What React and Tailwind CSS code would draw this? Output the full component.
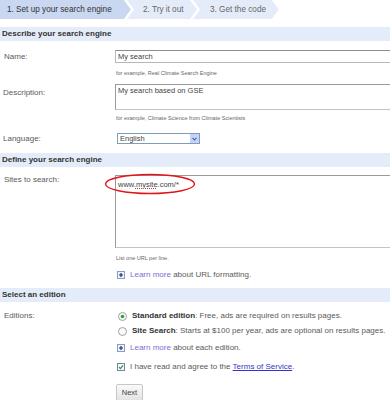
import React from 'react';

const font = { fontFamily: '"Liberation Sans", Arial, sans-serif' };

// chevron between two tabs
function Sep({ left, right }) {
    return (
        <svg width="16" height="19" viewBox="0 0 16 19" className="shrink-0 block">
            <rect x="0" y="0" width="16" height="19" fill={right} />
            <polygon points="0,0 6,0 13,9.5 6,19 0,19" fill={left} />
            <polygon points="6,0 9,0 16,9.5 9,19 6,19 13,9.5" fill="#ffffff" />
        </svg>
    );
}

function Header({ children, className = '' }) {
    return (
        <div className={`h-[14px] bg-[#e5ecf9] pl-[2px] text-[8px] leading-[14px] font-bold text-[#333] ${className}`}>
            {children}
        </div>
    );
}

function PlusIcon() {
    return (
        <svg width="8" height="8" viewBox="0 0 8 8" className="shrink-0">
            <rect x="0.5" y="0.5" width="7" height="7" fill="#eef2fb" stroke="#8a9cc4" />
            <path d="M4 2v4M2 4h4" stroke="#1f2f6e" strokeWidth="1.2" />
        </svg>
    );
}

function Radio({ checked }) {
    return (
        <svg width="9" height="9" viewBox="0 0 9 9" className="shrink-0">
            <circle cx="4.5" cy="4.5" r="4" fill="#fafafa" stroke="#8d8d8d" strokeWidth="0.8" />
            {checked && <circle cx="4.5" cy="4.5" r="1.8" fill="#2fa52f" />}
        </svg>
    );
}

export default function App() {
    return (
        <div style={font} className="w-[390px] h-[400px] overflow-hidden bg-white text-[#5a5a5a]">
            {/* steps */}
            <div className="flex h-[19px] text-[8.2px] leading-[19px]">
                <div className="w-[118px] shrink-0 bg-[#c9d7f1] pl-[7px] text-[#333] whitespace-nowrap">1. Set up your search engine</div>
                <Sep left="#c9d7f1" right="#e5ecf9" />
                <div className="w-[50px] shrink-0 bg-[#e5ecf9] pl-[9px] text-[#666] whitespace-nowrap">2. Try it out</div>
                <Sep left="#e5ecf9" right="#e5ecf9" />
                <div className="w-[66px] shrink-0 bg-[#e5ecf9] pl-[10px] text-[#666] whitespace-nowrap">3. Get the code</div>
                <Sep left="#e5ecf9" right="#ffffff" />
            </div>

            <Header className="mt-[8px]">Describe your search engine</Header>

            <div className="grid grid-cols-[115px_1fr] mt-[9px]">
                <div className="pl-[4px] text-[8px] leading-[13px]">Name:</div>
                <div className="w-[300px] h-[13px] border border-[#b8b8b8] border-t-[#8e8e8e] px-[2px] text-[7.5px] leading-[11px] text-[#444]">My search</div>
            </div>
            <div className="pl-[116px] mt-[7px] text-[5.5px] leading-[6px] text-[#666]">for example, Real Climate Search Engine</div>

            <div className="grid grid-cols-[115px_1fr] mt-[8px]">
                <div className="pl-[3px] pt-[3px] text-[8px] leading-[12px]">Description:</div>
                <div className="w-[300px] h-[26px] border border-[#c4c4c4] border-l-[#9a9a9a] border-t-[#9a9a9a] px-[2px] pt-[1px] text-[7.5px] leading-[10px] text-[#444]">My search based on GSE</div>
            </div>
            <div className="pl-[116px] mt-[5px] text-[5.5px] leading-[6px] text-[#666]">for example, Climate Science from Climate Scientists</div>

            <div className="grid grid-cols-[117px_1fr] mt-[12px]">
                <div className="pl-[3px] text-[8px] leading-[11px]">Language:</div>
                <div className="w-[83px] h-[11px] border border-[#7f9db9] flex items-center justify-between bg-white">
                    <span className="pl-[2px] text-[7.5px] leading-[9px] text-[#444]">English</span>
                    <span className="w-[9px] h-[9px] bg-[#c3d3fd] flex items-center justify-center">
                        <svg width="5" height="4" viewBox="0 0 5 4">
                            <path d="M0.5 0.8L2.5 3L4.5 0.8" fill="none" stroke="#4d6185" strokeWidth="1.1" />
                        </svg>
                    </span>
                </div>
            </div>

            <Header className="mt-[9px]">Define your search engine</Header>

            <div className="grid grid-cols-[115px_1fr] mt-[8px]">
                <div className="pl-[4px] text-[8px] leading-[10px]">Sites to search:</div>
                <div className="relative w-[300px] h-[73px] border border-[#c4c4c4] border-l-[#9a9a9a] border-t-[#9a9a9a] px-[2px] pt-[4px] text-[7.5px] leading-[10px] text-[#444]">
                    <span>www.<span className="underline decoration-dotted decoration-[#e03030]">mysite</span>.com/*</span>
                    <svg width="92" height="22" viewBox="0 0 92 22" className="absolute left-[-12px] top-[-3px]">
                        <ellipse cx="46" cy="11" rx="44.5" ry="9.5" fill="none" stroke="#e0151b" strokeWidth="1.4" />
                    </svg>
                </div>
            </div>
            <div className="pl-[116px] mt-[7px] text-[5.5px] leading-[6px] text-[#666]">List one URL per line.</div>

            <div className="pl-[117px] mt-[9px] flex items-center gap-[5px] text-[8px] leading-[10px]">
                <PlusIcon />
                <span><span className="text-[#7a6fd6]">Learn more</span> about URL formatting.</span>
            </div>

            <Header className="mt-[8px]">Select an edition</Header>

            <div className="grid grid-cols-[118px_1fr] mt-[8px]">
                <div className="pl-[4px] text-[8px] leading-[12px]">Editions:</div>
                <div className="flex flex-col gap-[3px] text-[8px] leading-[12px] whitespace-nowrap">
                    <div className="flex items-center gap-[5px]">
                        <Radio checked />
                        <span><b className="text-[#333]">Standard edition</b>: Free, ads are required on results pages.</span>
                    </div>
                    <div className="flex items-center gap-[5px]">
                        <Radio />
                        <span><b className="text-[#333]">Site Search</b>: Starts at $100 per year, ads are optional on results pages.</span>
                    </div>
                </div>
            </div>

            <div className="pl-[117px] mt-[6px] flex items-center gap-[5px] text-[8px] leading-[10px]">
                <PlusIcon />
                <span><span className="text-[#7a6fd6]">Learn more</span> about each edition.</span>
            </div>

            <div className="pl-[117px] mt-[9px] flex items-center gap-[5px] text-[8px] leading-[10px]">
                <svg width="8" height="8" viewBox="0 0 8 8" className="shrink-0">
                    <rect x="0.5" y="0.5" width="7" height="7" fill="#f6f8fb" stroke="#6f86a8" />
                    <path d="M2 4.2L3.4 5.6L6 2.4" fill="none" stroke="#2a9a2a" strokeWidth="1.2" />
                </svg>
                <span>I have read and agree to the <span className="text-[#3535c8] underline">Terms of Service</span>.</span>
            </div>

            <div className="pl-[116px] mt-[6px]">
                <button className="w-[27px] h-[18px] border border-[#c8c8c8] rounded-[2px] bg-gradient-to-b from-[#fafafa] to-[#e2e2e2] text-[7.5px] text-[#444]">
                    Next
                </button>
            </div>
        </div>
    );
}
